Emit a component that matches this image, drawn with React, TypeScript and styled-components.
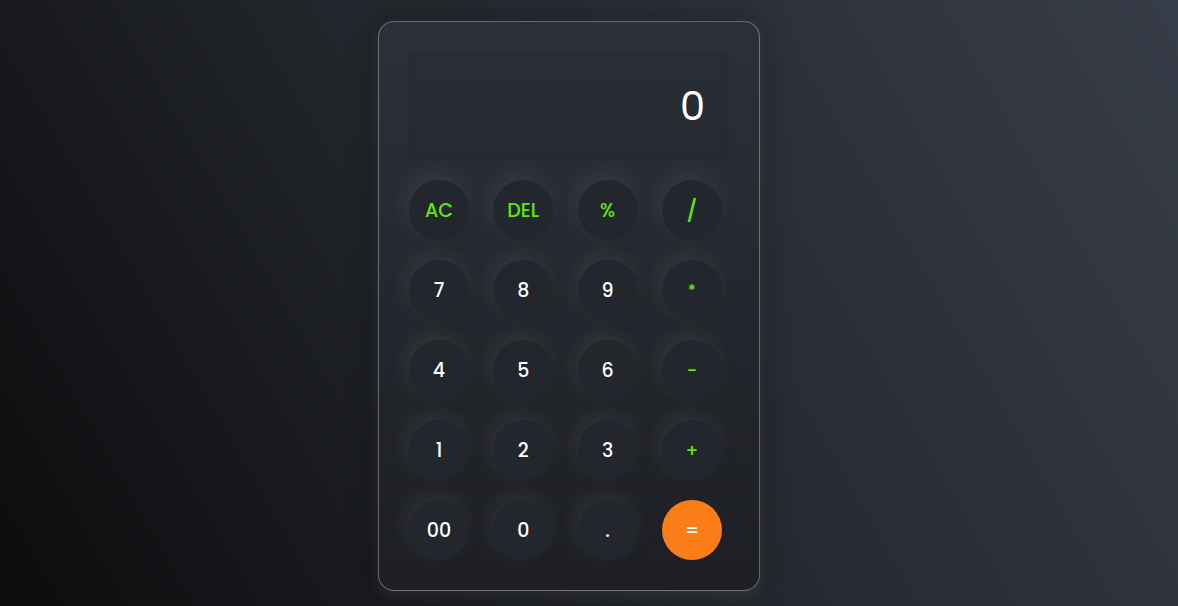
import React from "react";
import styled, { createGlobalStyle } from "styled-components";

const GlobalStyle = createGlobalStyle`
  html, body {
    margin: 0;
    padding: 0;
    height: 100%;
  }
  body {
    font-family: Poppins, Inter, "Noto Sans", sans-serif;
    background: linear-gradient(60deg, #0b0c0d 0%, #23262c 45%, #373d48 100%);
    min-height: 100vh;
  }
`;

const Page = styled.div`
  min-height: 100vh;
  display: flex;
  justify-content: center;
  align-items: flex-start;
  padding: 21px 40px 0 0;
  box-sizing: border-box;
`;

const Calculator = styled.div`
  width: 382px;
  box-sizing: border-box;
  padding: 30px;
  border: 1px solid rgba(255, 255, 255, 0.32);
  border-radius: 16px;
  background: linear-gradient(180deg, #2c3139 0%, #22252b 60%, #1d1f24 100%);
  box-shadow: 0 4px 14px rgba(255, 255, 255, 0.1), 0 0 30px rgba(0, 0, 0, 0.4);
  display: flex;
  flex-direction: column;
  gap: 20px;
`;

const Display = styled.div`
  height: 108px;
  display: flex;
  align-items: center;
  justify-content: flex-end;
  padding: 0 24px;
  background: rgba(0, 0, 0, 0.04);
  box-shadow: inset 0 0 8px rgba(0, 0, 0, 0.08);
  color: #ffffff;
  font-size: 40px;
  font-weight: 400;
`;

const Keys = styled.div`
  display: grid;
  grid-template-columns: repeat(4, 60px);
  column-gap: 24.3px;
  row-gap: 20px;
`;

type Kind = "num" | "op" | "eq";

const Key = styled.button<{ $kind: Kind; $size?: number }>`
  width: 60px;
  height: 60px;
  border-radius: 50%;
  border: none;
  padding: 0;
  font-family: inherit;
  font-size: ${(p) => p.$size ?? 19}px;
  font-weight: 500;
  color: ${(p) => (p.$kind === "op" ? "#5fe80c" : "#ffffff")};
  background: ${(p) => (p.$kind === "eq" ? "#fb7d17" : "#23262d")};
  box-shadow: ${(p) =>
    p.$kind === "eq"
      ? "none"
      : "-3px -5px 22px rgba(255, 255, 255, 0.09), 3px 5px 14px rgba(0, 0, 0, 0.1)"};
  display: flex;
  align-items: center;
  justify-content: center;
  cursor: pointer;
`;

const keys: { label: string; kind: Kind; size?: number }[] = [
  { label: "AC", kind: "op" },
  { label: "DEL", kind: "op" },
  { label: "%", kind: "op" },
  { label: "/", kind: "op", size: 22 },
  { label: "7", kind: "num" },
  { label: "8", kind: "num" },
  { label: "9", kind: "num" },
  { label: "*", kind: "op", size: 16 },
  { label: "4", kind: "num" },
  { label: "5", kind: "num" },
  { label: "6", kind: "num" },
  { label: "-", kind: "op", size: 18 },
  { label: "1", kind: "num" },
  { label: "2", kind: "num" },
  { label: "3", kind: "num" },
  { label: "+", kind: "op", size: 18 },
  { label: "00", kind: "num" },
  { label: "0", kind: "num" },
  { label: ".", kind: "num" },
  { label: "=", kind: "eq", size: 18 },
];

export default function App() {
  return (
    <>
      <GlobalStyle />
      <Page>
        <Calculator>
          <Display>0</Display>
          <Keys>
            {keys.map((k) => (
              <Key key={k.label} $kind={k.kind} $size={k.size}>
                {k.label}
              </Key>
            ))}
          </Keys>
        </Calculator>
      </Page>
    </>
  );
}
